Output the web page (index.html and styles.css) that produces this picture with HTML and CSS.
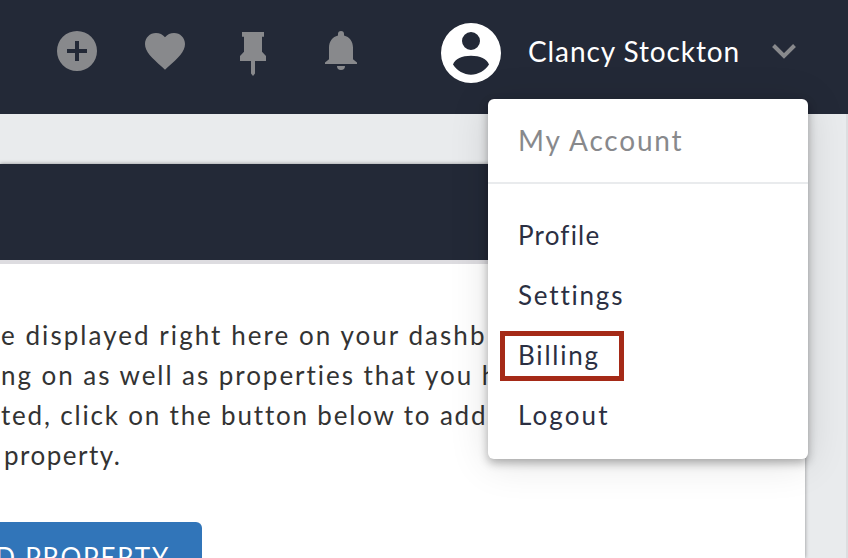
FILE: index.html
```html
<!DOCTYPE html>
<html lang="en">
<head>
    <meta charset="UTF-8" />
    <meta name="viewport" content="width=device-width, initial-scale=1.0"/>
    <title>Dashboard</title>
    <link rel="stylesheet" href="styles.css">
</head>
<body>
<header class="topbar">
    <nav class="icons">
        <svg class="icon" width="40" height="40" viewBox="0 0 40 40">
            <path fill-rule="evenodd" d="M20 0a20 20 0 1 0 0 40a20 20 0 1 0 0-40zM18 10h4v8h8v4h-8v8h-4v-8h-8v-4h8z"/>
        </svg>
        <svg class="icon" width="40" height="40" viewBox="0 0 40 40">
            <path d="M20 38.7L17.1 36C6.8 26.8 0 20.600 0 13C0 6.800 4.800 2 11 2c3.500 0 6.800 1.600 9 4.200C22.200 3.600 25.500 2 29 2c6.200 0 11 4.800 11 11c0 7.600-6.800 13.800-17.100 23.100z"/>
        </svg>
        <svg class="icon" width="26" height="44" viewBox="0 0 26 44">
            <path d="M2 0h22v4.700h-2v15l4 4.300v5H15v12.500l-2 2.500l-2-2.500V29H0v-5l4-4.300v-15H2z"/>
        </svg>
        <svg class="icon" width="32" height="40" viewBox="0 0 32 40">
            <path d="M16 0a3 3 0 0 1 3 3v1.400C24.500 5.800 28 10.400 28 16.500v11.800l4 3.200V33H0v-1.500l4-3.200V16.500C4 10.400 7.500 5.800 13 4.400V3a3 3 0 0 1 3-3zM12 35h8a4 4 0 0 1-8 0z"/>
        </svg>
    </nav>
    <div class="user">
        <svg class="avatar" width="60" height="60" viewBox="0 0 60 60">
            <path fill-rule="evenodd" d="M30 0a30 30 0 1 0 0 60a30 30 0 1 0 0-60zM30 9a9 9 0 1 1 0 18a9 9 0 1 1 0-18zM30 32.700c9 0 16 3.300 18 8.700c-4 6-11 10.300-18 10.300S16 47.400 12 41.400c2-5.400 9-8.700 18-8.700z"/>
        </svg>
        <span class="user-name">Clancy Stockton</span>
        <svg class="chevron" width="24" height="15" viewBox="0 0 24 15">
            <path d="M1.500 1.500L12 12L22.500 1.500"/>
        </svg>
    </div>
    <div class="menu">
        <div class="menu-title">My Account</div>
        <ul class="menu-list">
            <li class="profile">Profile</li>
            <li class="settings">Settings</li>
            <li class="billing">Billing</li>
            <li class="logout">Logout</li>
        </ul>
    </div>
</header>

<main class="page">
    <section class="card">
        <div class="card-header"></div>
        <div class="card-body">
            <p class="intro">
                <span class="line-1">e displayed right here on your dashb</span>
                <span class="line-2">ng on as well as properties that you h</span>
                <span class="line-3">ted, click on the button below to add</span>
                <span class="line-4">property.</span>
            </p>
            <button class="add-button">D PROPERTY</button>
        </div>
    </section>
</main>
</body>
</html>
```

FILE: styles.css
```css
* {
    box-sizing: border-box;
}

body {
    margin: 0;
    height: 558px;
    overflow: hidden;
    font-family: Lato, "Open Sans", sans-serif;
    font-size: 26px;
    color: #333;
    background: #e9ebed;
}

.topbar {
    position: relative;
    display: flex;
    height: 114px;
    background: #232937;
}

.icons {
    display: flex;
    align-items: flex-start;
    padding: 31px 0 0 57px;
}

.icon {
    fill: #88898c;
    margin-right: 48px;
}

.icon:nth-child(2) {
    margin-right: 55px;
}

.icon:nth-child(3) {
    margin: 1px 59px 0 0;
}

.icon:nth-child(4) {
    margin-right: 84px;
}

.user {
    display: flex;
    align-items: center;
    height: 60px;
    margin-top: 23px;
}

.avatar {
    fill: #fff;
}

.user-name {
    width: 245px;
    padding-left: 27px;
    margin-top: -5px;
    color: #fff;
    font-size: 28px;
    letter-spacing: 0.9px;
    white-space: nowrap;
}

.chevron {
    margin: -3px 0 0 26px;
    fill: none;
    stroke: #88898c;
    stroke-width: 4;
}

.menu {
    position: absolute;
    top: 99px;
    left: 488px;
    z-index: 2;
    width: 320px;
    height: 360px;
    border-radius: 6px;
    background: #fff;
    box-shadow: 0 4px 10px rgba(0, 0, 0, 0.3), 0 4px 40px rgba(0, 0, 0, 0.12);
}

.menu-title {
    height: 85px;
    padding-left: 30px;
    border-bottom: 2px solid #e9ebed;
    line-height: 82px;
    font-size: 28px;
    letter-spacing: 1.8px;
    color: #88898c;
}

.menu-list {
    margin: 0;
    padding: 22px 0 0 12px;
    list-style: none;
    color: #2b2f42;
    letter-spacing: 1.8px;
}

.menu-list li {
    width: 124px;
    height: 50px;
    margin-bottom: 10px;
    padding-left: 18px;
    line-height: 58px;
}

.menu-list .profile {
    letter-spacing: 1.2px;
}

.menu-list .billing {
    margin: 15px 0 5px;
    padding-left: 13px;
    border: 5px solid #a52a17;
    line-height: 38px;
}

.menu-list .logout {
    letter-spacing: 2.1px;
}

.page {
    height: 444px;
    padding-top: 50px;
    border-right: 2px solid #dcdee0;
}

.card {
    width: 805px;
    height: 394px;
    background: #fff;
    box-shadow: 0 0 4px rgba(0, 0, 0, 0.4);
}

.card-header {
    height: 100px;
    border-bottom: 4px solid #dddce0;
    background: #232937;
}

.card-body {
    height: 294px;
    padding-top: 51px;
    overflow: hidden;
}

.intro {
    margin: 0;
    line-height: 40px;
    letter-spacing: 1.95px;
    white-space: nowrap;
}

.intro span {
    display: block;
    padding-left: 1px;
}

.intro .line-1 {
    letter-spacing: 2.05px;
}

.intro .line-3 {
    letter-spacing: 1.82px;
}

.intro .line-4 {
    padding-left: 4px;
    letter-spacing: 1.5px;
}

.add-button {
    display: block;
    width: 242px;
    height: 70px;
    margin: 47px 0 0 -40px;
    padding: 0 32px 0 0;
    border: none;
    border-radius: 6px;
    background: #3175b9;
    color: #fff;
    font: 26px Lato, sans-serif;
    letter-spacing: 1.8px;
    text-align: right;
    white-space: nowrap;
}
```
